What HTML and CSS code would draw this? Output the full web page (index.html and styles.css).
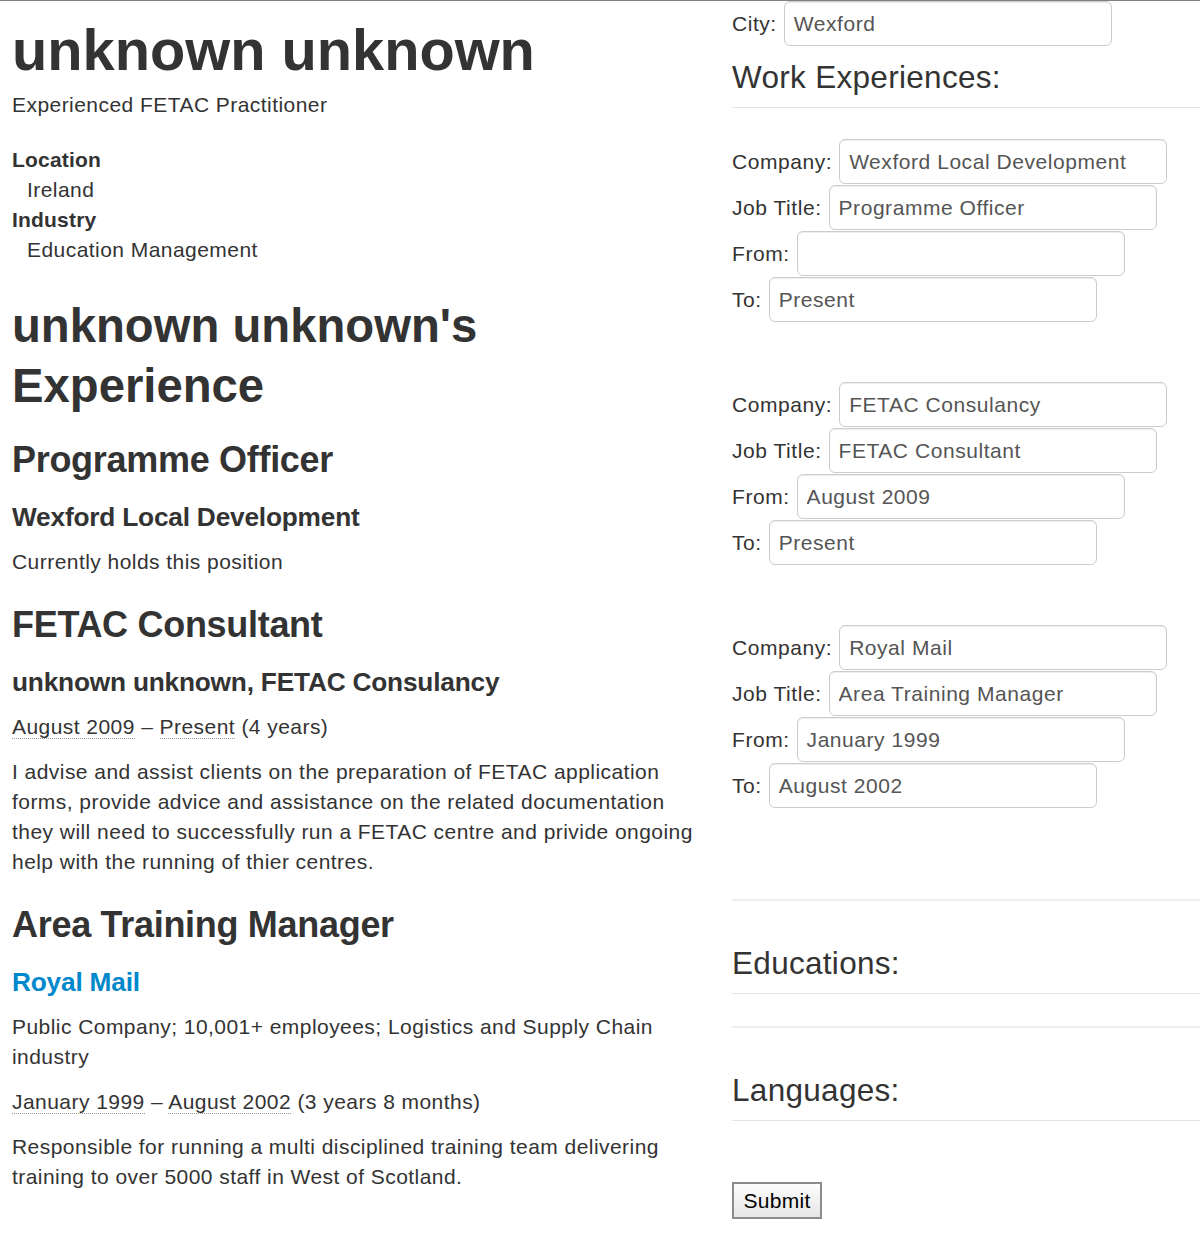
FILE: index.html
```html
<!DOCTYPE html>
<html>
<head>
<meta charset="utf-8">
<link rel="stylesheet" href="styles.css">
</head>
<body>
<div class="page">
  <div class="profile">
    <h1 class="name">unknown unknown</h1>
    <p class="headline">Experienced FETAC Practitioner</p>
    <dl class="facts">
      <dt>Location</dt>
      <dd>Ireland</dd>
      <dt>Industry</dt>
      <dd>Education Management</dd>
    </dl>
    <h2>unknown unknown's Experience</h2>

    <h3>Programme Officer</h3>
    <h4>Wexford Local Development</h4>
    <p>Currently holds this position</p>

    <h3>FETAC Consultant</h3>
    <h4>unknown unknown, FETAC Consulancy</h4>
    <p><abbr>August 2009</abbr> – <abbr>Present</abbr> (4 years)</p>
    <p>I advise and assist clients on the preparation of FETAC application forms, provide advice and assistance on the related documentation they will need to successfully run a FETAC centre and privide ongoing help with the running of thier centres.</p>

    <h3>Area Training Manager</h3>
    <h4><a class="company-link" href="#">Royal Mail</a></h4>
    <p>Public Company; 10,001+ employees; Logistics and Supply Chain industry</p>
    <p><abbr>January 1999</abbr> – <abbr>August 2002</abbr> (3 years 8 months)</p>
    <p>Responsible for running a multi disciplined training team delivering training to over 5000 staff in West of Scotland.</p>
  </div>

  <form class="editor">
    <div class="row row-city"><label>City:</label><input type="text" value="Wexford"></div>

    <div class="legend legend-work">Work Experiences:</div>

    <div class="group">
      <div class="row"><label>Company:</label><input type="text" value="Wexford Local Development"></div>
      <div class="row"><label>Job Title:</label><input type="text" value="Programme Officer"></div>
      <div class="row"><label>From:</label><input type="text" value=""></div>
      <div class="row"><label>To:</label><input type="text" value="Present"></div>
    </div>

    <div class="group">
      <div class="row"><label>Company:</label><input type="text" value="FETAC Consulancy"></div>
      <div class="row"><label>Job Title:</label><input type="text" value="FETAC Consultant"></div>
      <div class="row"><label>From:</label><input type="text" value="August 2009"></div>
      <div class="row"><label>To:</label><input type="text" value="Present"></div>
    </div>

    <div class="group">
      <div class="row"><label>Company:</label><input type="text" value="Royal Mail"></div>
      <div class="row"><label>Job Title:</label><input type="text" value="Area Training Manager"></div>
      <div class="row"><label>From:</label><input type="text" value="January 1999"></div>
      <div class="row"><label>To:</label><input type="text" value="August 2002"></div>
    </div>

    <hr class="sep sep-first">
    <div class="legend">Educations:</div>
    <hr class="sep">
    <div class="legend legend-lang">Languages:</div>

    <button type="button" class="submit">Submit</button>
  </form>
</div>
</body>
</html>
```

FILE: styles.css
```css
html, body {
  margin: 0;
  padding: 0;
  background: #fff;
}

body {
  border-top: 1px solid #808080;
  font-family: "Liberation Sans", Arial, Helvetica, sans-serif;
  font-size: 21px;
  line-height: 30px;
  letter-spacing: 0.45px;
  color: #333;
  overflow: hidden;
}

.page {
  display: flex;
  align-items: flex-start;
  padding-left: 12px;
  gap: 20px;
}

.profile {
  width: 700px;
  flex: none;
}

.profile h1,
.profile h2,
.profile h3,
.profile h4 {
  font-weight: bold;
  letter-spacing: 0;
  margin: 15px 0;
}

.profile h1 {
  font-size: 57.75px;
  line-height: 60px;
}

.profile h1.name {
  margin: 19px 0 10px;
}

.profile h2 {
  font-size: 47.25px;
  line-height: 60px;
  padding-top: 4px;
  margin-bottom: 11px;
}

.profile h2 + h3 {
  margin-top: 11px;
}

.profile h3 {
  font-size: 36px;
  line-height: 54px;
  padding-top: 6px;
  letter-spacing: -0.3px;
}

.profile h4 {
  font-size: 26.25px;
  line-height: 30px;
  letter-spacing: -0.2px;
}

.profile p {
  margin: 0 0 15px;
}

.profile p.headline {
  margin: 0;
}

.facts {
  margin: 25px 0 27px;
}

.facts dt {
  font-weight: bold;
  letter-spacing: 0.2px;
}

.facts dd {
  margin-left: 15px;
}

abbr {
  text-decoration: none;
  border-bottom: 1px dotted #999;
}

.company-link {
  color: #0088cc;
  text-decoration: none;
}

.editor {
  flex: 1;
  min-width: 468px;
  margin: 0;
}

.row {
  display: flex;
  align-items: baseline;
  gap: 7px;
  margin-bottom: 1px;
}

.row-city {
  margin-top: 0;
}

.row label {
  color: #333;
  white-space: nowrap;
  letter-spacing: 0.55px;
}

.row input {
  box-sizing: border-box;
  width: 328px;
  height: 45px;
  padding: 6px 9px;
  border: 1px solid #ccc;
  border-radius: 6px;
  font-family: "Liberation Sans", Arial, Helvetica, sans-serif;
  font-size: 21px;
  line-height: 30px;
  letter-spacing: 0.55px;
  color: #555;
  background: #fff;
  margin: 0;
  box-shadow: inset 0 1px 1px rgba(0, 0, 0, 0.075);
}

.legend {
  font-size: 31.5px;
  line-height: 60px;
  letter-spacing: 0.3px;
  color: #333;
  border-bottom: 1px solid #e5e5e5;
}

.legend-work {
  margin-bottom: 31px;
}

.group {
  margin-bottom: 60px;
}

.sep {
  border: 0;
  border-top: 2px solid #eee;
  margin: 32px 0 32px;
  height: 0;
}

.sep-first {
  margin-top: 91px;
}

.legend-lang {
  margin-bottom: 61px;
}

.submit {
  display: block;
  width: 90px;
  height: 37px;
  padding: 0;
  border: 2px solid #8c8c8c;
  border-radius: 0;
  background: linear-gradient(#fdfdfd, #e6e6e6);
  font-family: "Liberation Sans", Arial, Helvetica, sans-serif;
  font-size: 21px;
  letter-spacing: 0.3px;
  color: #000;
}
```
